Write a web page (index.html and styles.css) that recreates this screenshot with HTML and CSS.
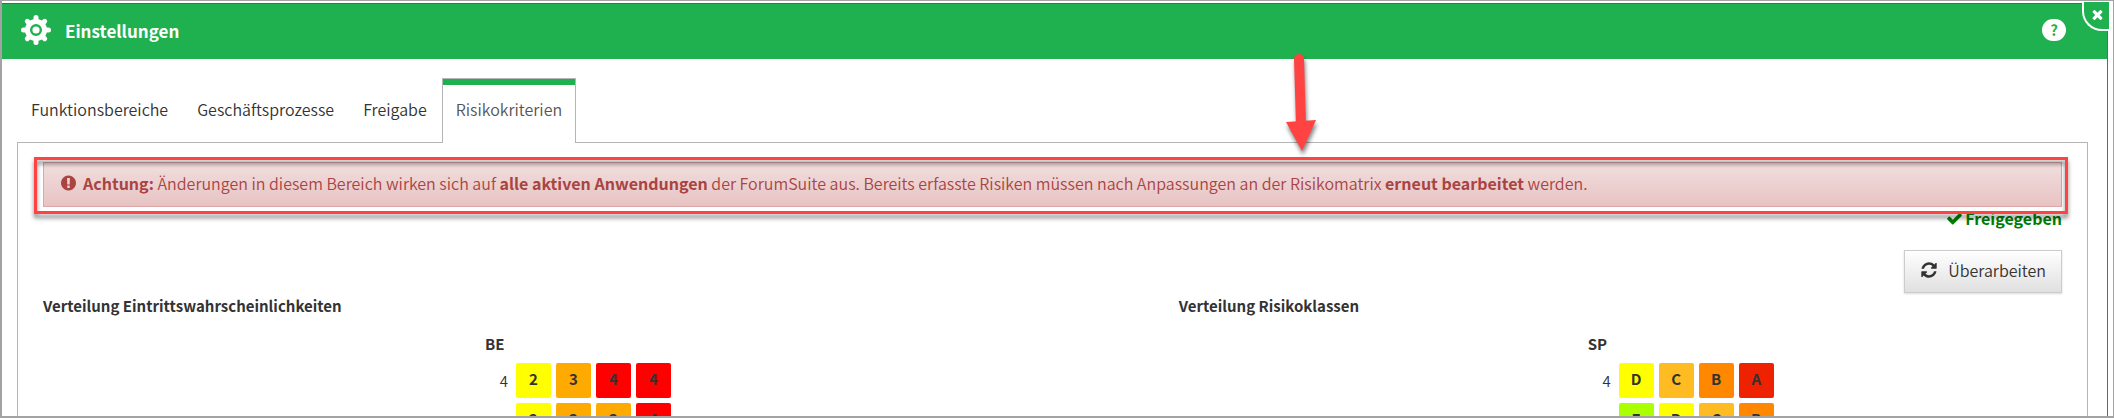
FILE: index.html
```html
<!DOCTYPE html>
<html lang="de">
<head>
    <meta charset="UTF-8">
    <meta name="viewport" content="width=device-width, initial-scale=1.0">
    <title>Einstellungen</title>
    <link rel="stylesheet" href="styles.css">
</head>
<body>

    <div class="frame">
        <div class="window">
            <header class="titlebar">
                <svg class="gear" viewBox="0 0 30 30" aria-hidden="true">
                    <g stroke="#fff" stroke-width="5" stroke-linecap="round">
                        <path d="M15 2.5v4M15 23.5v4M2.5 15h4M23.5 15h4M6.3 6.3l2.5 2.5M21.2 21.2l2.5 2.5M23.7 6.3l-2.5 2.5M8.8 21.2l-2.5 2.5"/>
                    </g>
                    <circle cx="15" cy="15" r="8.500" fill="none" stroke="#fff" stroke-width="5"/>
                    <circle cx="15" cy="15" r="3.6" fill="#fff"/>
                </svg>
                <h1>Einstellungen</h1>
                <button type="button" class="help" title="Hilfe">?</button>
            </header>
            <button type="button" class="close" aria-label="Schließen">
                <svg viewBox="0 0 1792 1792" aria-hidden="true"><path d="M1490 1322q0 40-28 68l-136 136q-28 28-68 28t-68-28l-294-294-294 294q-28 28-68 28t-68-28l-136-136q-28-28-28-68t28-68l294-294-294-294q-28-28-28-68t28-68l136-136q28-28 68-28t68 28l294 294 294-294q28-28 68-28t68 28l136 136q28 28 28 68t-28 68l-294 294 294 294q28 28 28 68z"/></svg>
            </button>

            <nav class="tabs">
                <a href="#funktionsbereiche">Funktionsbereiche</a>
                <a href="#geschaeftsprozesse">Geschäftsprozesse</a>
                <a href="#freigabe">Freigabe</a>
                <a href="#risikokriterien" class="active">Risikokriterien</a>
            </nav>

            <main class="panel" id="risikokriterien">
                <div class="alert">
                    <svg viewBox="0 0 1536 1792" aria-hidden="true"><path d="M768 128q209 0 385.500 103t279.500 279.500 103 385.500-103 385.500-279.500 279.500-385.500 103-385.500-103-279.500-279.500-103-385.500 103-385.500 279.500-279.500 385.500-103zm127 1247v-190q0-14-9-23.500t-22-9.500h-192q-13 0-23 10t-10 23v190q0 13 10 23t23 10h192q13 0 22-9.500t9-23.500zm-2-344l18-621q0-12-10-18-10-8-24-8h-220q-14 0-24 8-10 6-10 18l17 621q0 10 10 17.500t24 7.500h185q14 0 23.500-7.500t10.500-17.500z"/></svg>
                    <p><b>Achtung:</b> Änderungen in diesem Bereich wirken sich auf <b>alle aktiven Anwendungen</b> der ForumSuite aus. Bereits erfasste Risiken müssen nach Anpassungen an der Risikomatrix <b>erneut bearbeitet</b> werden.</p>
                </div>

                <div class="status">
                    <svg viewBox="0 0 1792 1792" aria-hidden="true"><path d="M1671 566q0 40-28 68l-724 724-136 136q-28 28-68 28t-68-28l-136-136-362-362q-28-28-28-68t28-68l136-136q28-28 68-28t68 28l294 295 656-657q28-28 68-28t68 28l136 136q28 28 28 68z"/></svg>
                    Freigegeben
                </div>

                <div class="actions">
                    <button type="button" class="btn">
                        <svg viewBox="0 0 1792 1792" aria-hidden="true"><path d="M1639 1056q0 5-1 7-64 268-268 434.500t-478 166.500q-146 0-282.500-55t-243.500-157l-129 129q-19 19-45 19t-45-19-19-45v-448q0-26 19-45t45-19h448q26 0 45 19t19 45-19 45l-137 137q71 66 161 102t187 36q134 0 250-65t186-179q11-17 53-117 8-23 30-23h192q13 0 22.500 9.500t9.500 22.500zm25-800v448q0 26-19 45t-45 19h-448q-26 0-45-19t-19-45 19-45l138-138q-148-137-349-137-134 0-250 65t-186 179q-11 17-53 117-8 23-30 23h-199q-13 0-22.500-9.500t-9.500-22.500v-7q65-268 270-434.500t480-166.500q146 0 284 55.500t245 156.500l130-129q19-19 45-19t45 19 19 45z"/></svg>
                        Überarbeiten
                    </button>
                </div>

                <div class="charts">
                    <section>
                        <h2>Verteilung Eintrittswahrscheinlichkeiten</h2>
                        <table class="matrix matrix-be">
                            <thead>
                                <tr><th colspan="5" scope="col">BE</th></tr>
                            </thead>
                            <tbody>
                                <tr>
                                    <th scope="row">4</th>
                                    <td class="yellow">2</td>
                                    <td class="orange">3</td>
                                    <td class="red">4</td>
                                    <td class="red">4</td>
                                </tr>
                                <tr>
                                    <th scope="row">3</th>
                                    <td class="yellow">2</td>
                                    <td class="orange">3</td>
                                    <td class="orange">3</td>
                                    <td class="red">4</td>
                                </tr>
                            </tbody>
                        </table>
                    </section>
                    <section>
                        <h2>Verteilung Risikoklassen</h2>
                        <table class="matrix matrix-sp">
                            <thead>
                                <tr><th colspan="5" scope="col">SP</th></tr>
                            </thead>
                            <tbody>
                                <tr>
                                    <th scope="row">4</th>
                                    <td class="yellow">D</td>
                                    <td class="class-c">C</td>
                                    <td class="class-b">B</td>
                                    <td class="class-a">A</td>
                                </tr>
                                <tr>
                                    <th scope="row">3</th>
                                    <td class="class-e">E</td>
                                    <td class="yellow">D</td>
                                    <td class="class-c">C</td>
                                    <td class="class-b">B</td>
                                </tr>
                            </tbody>
                        </table>
                    </section>
                </div>
            </main>
        </div>

        <!-- arrow pointing at the warning -->
        <svg class="arrow" viewBox="0 0 40 110" aria-hidden="true">
            <path d="M13 9L15 75" stroke="#ff4343" stroke-width="10" stroke-linecap="round"/>
            <path d="M0 72L30 70L16 101z" fill="#ff4343"/>
        </svg>
    </div>

</body>
</html>
```
FILE: styles.css
```css
* {
    box-sizing: border-box;
}
body {
    margin: 0;
    font-family: "Noto Sans CJK SC", "Noto Sans", sans-serif;
    font-size: 16px;
    font-weight: 350;
    line-height: 24px;
    color: #333;
    background-color: #fff;
}
h1, h2, p {
    margin: 0;
}
b {
    font-weight: bold;
}
button {
    font-family: inherit;
    cursor: pointer;
}
.frame {
    position: relative;
    height: 100vh;
    overflow: hidden;
    border: 2px solid #a3a3a3;
    border-width: 1px 1px 2px 2px;
    padding: 2px 5px 0 0;
}
.window {
    position: relative;
    min-height: 100%;
    border-top: 1px solid #0b8f37;
    border-right: 1px solid #159743;
}

/* title bar */
.titlebar {
    display: flex;
    align-items: center;
    height: 55px;
    padding: 0 41px 3px 19px;
    background-color: #1fb14f;
    color: #fff;
}
.gear {
    width: 30px;
    height: 30px;
    margin-right: 14px;
}
h1 {
    flex: 1;
    padding-top: 2px;
    font-size: 17px;
    font-weight: bold;
}
.help {
    width: 24px;
    height: 22px;
    padding: 0;
    border: none;
    border-radius: 11px;
    background-color: #fff;
    color: #1fb14f;
    font-size: 15px;
    font-weight: bold;
    line-height: 22px;
}
.close {
    position: absolute;
    top: -2px;
    right: -2px;
    width: 27px;
    height: 29px;
    padding: 0 0 2px 2px;
    border: 2px solid #fff;
    border-width: 0 0 2px 2px;
    border-bottom-left-radius: 20px;
    background-color: #1fb14f;
}
.close svg {
    display: block;
    width: 15px;
    height: 15px;
    margin: 0 auto;
    fill: #fff;
}

/* tabs */
.tabs {
    display: flex;
    margin: 19px 0 -1px 15px;
}
.tabs a {
    height: 65px;
    padding: 18px 13px 0;
    border: 1px solid transparent;
    border-bottom: none;
    color: #333;
    text-decoration: none;
    margin-right: 1px;
}
.tabs .active {
    padding-top: 0;
    border-color: #b5b5b5;
    background-color: #fff;
    color: #555;
    position: relative;
}
.tabs .active::before {
    content: "";
    display: block;
    height: 6px;
    margin: 0 -13px 12px;
    background-color: #1fb14f;
}
.panel {
    min-height: 300px;
    margin: 0 19px 0 15px;
    padding: 19px 25px;
    border: 1px solid #b5b5b5;
}

/* warning */
.alert {
    position: relative;
    z-index: 1;
    display: flex;
    align-items: center;
    height: 45px;
    padding: 0 17px 3px;
    border: 1px solid #dca7a7;
    background-image: linear-gradient(#f2dede, #e7c3c3);
    color: #a94442;
}
.alert svg {
    width: 15px;
    height: 18px;
    margin-right: 7px;
    fill: #a94442;
}
.alert::after {
    content: "";
    position: absolute;
    inset: -6px -7px -8px -10px;
    border: 3px solid #ff4343;
    filter: drop-shadow(0 4px 2px rgba(0, 0, 0, 0.5));
}

.status {
    display: flex;
    justify-content: flex-end;
    align-items: center;
    height: 22px;
    color: #008000;
    font-weight: bold;
}
.status svg {
    width: 17px;
    height: 17px;
    margin-right: 2px;
    fill: #008000;
}
.actions {
    display: flex;
    justify-content: flex-end;
    margin-top: 21px;
}
.btn {
    display: flex;
    align-items: center;
    height: 43px;
    padding: 0 15px 3px;
    border: 1px solid #ccc;
    background-image: linear-gradient(#fff, #e0e0e0);
    box-shadow: 0 1px 2px rgba(0, 0, 0, 0.15);
    color: #333;
    font-size: 16px;
    font-weight: 350;
}
.btn svg {
    width: 18px;
    height: 18px;
    margin-right: 10px;
    fill: #333;
}

/* matrices */
.charts {
    display: grid;
    grid-template-columns: 9fr 7fr;
}
h2 {
    font-size: 15px;
    font-weight: bold;
    line-height: 26px;
}
.matrix {
    margin-top: 7px;
    border-collapse: separate;
    border-spacing: 5px;
    font-size: 15px;
    line-height: 20px;
}
.matrix-be {
    margin-left: 437px;
}
.matrix-sp {
    margin-left: 404px;
}
.matrix th, .matrix td {
    padding: 0;
}
.matrix thead th {
    height: 27px;
    padding-bottom: 2px;
    font-weight: bold;
    text-align: left;
}
.matrix tbody th {
    width: 26px;
    padding-right: 3px;
    font-weight: 350;
    text-align: right;
}
.matrix td {
    width: 35px;
    height: 35px;
    padding-bottom: 3px;
    border-radius: 2px;
    font-weight: bold;
    text-align: center;
}
.yellow { background-color: #ffff00; }
.orange { background-color: #ffaa00; }
.red { background-color: #ff0000; }
.class-a { background-color: #ee2200; }
.class-b { background-color: #ff8800; }
.class-c { background-color: #ffbb22; }
.class-e { background-color: #aaff00; }

.arrow {
    position: absolute;
    top: 49px;
    left: 1284px;
    z-index: 2;
    width: 40px;
    height: 110px;
    fill: none;
    overflow: visible;
    filter: drop-shadow(1px 4px 2px rgba(0, 0, 0, 0.5));
}
```
